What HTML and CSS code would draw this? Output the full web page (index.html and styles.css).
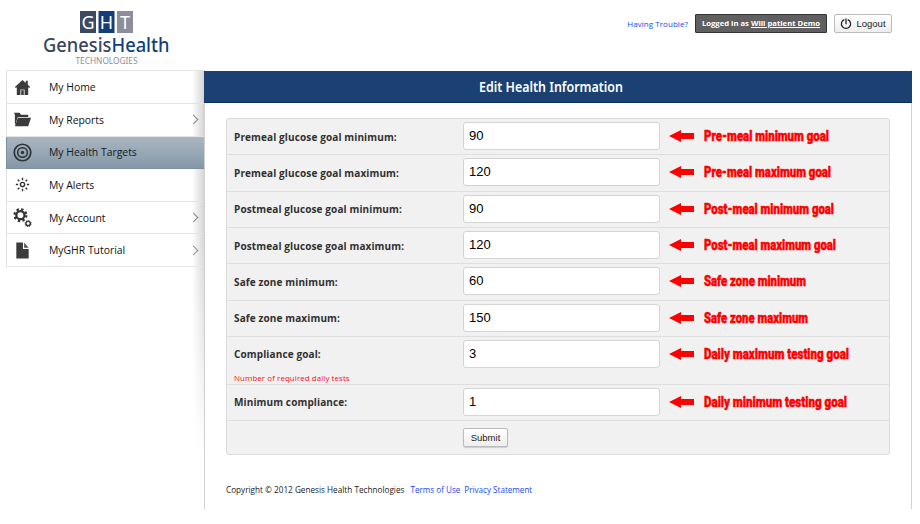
FILE: index.html
```html
<!DOCTYPE html>
<html lang="en">
<head>
<meta charset="utf-8">
<title>Edit Health Information</title>
<link rel="stylesheet" href="styles.css">
</head>
<body>
<header class="top">
  <svg class="logo" width="140" height="62" viewBox="0 0 140 62" role="img" aria-label="Genesis Health Technologies">
    <rect x="40" y="7" width="16" height="22" fill="#3b4a60"/><rect x="58.5" y="7" width="16" height="22" fill="#123e79"/><rect x="77" y="7" width="16" height="22" fill="#8c8f9b"/>
    <g class="logo-tiles"><text x="48" y="24.5" text-anchor="middle">G</text><text x="66.5" y="24.5" text-anchor="middle">H</text><text x="85" y="24.5" text-anchor="middle">T</text></g>
    <text class="logo-name" x="3" y="48" textLength="126.5" lengthAdjust="spacingAndGlyphs" fill="#38455d">Genesis<tspan fill="#133f7d">Health</tspan></text>
    <text class="logo-sub" x="35.5" y="59.5" textLength="62" lengthAdjust="spacingAndGlyphs">TECHNOLOGIES</text>
  </svg>
  <div class="account">
    <a class="trouble">Having Trouble?</a>
    <div class="user">Logged in as <u>Will patient Demo</u></div>
    <button class="btn logout"><svg width="12" height="12" viewBox="0 0 12 12" fill="none" stroke="#222" stroke-width="1.3"><path d="M4.3 1.6a4.6 4.6 0 1 0 3.4 0M6 .4v5.8"/></svg><span>Logout</span></button>
  </div>
</header>
<div class="main">
  <nav class="side">
    <a class="item"><svg viewBox="0 0 20 20"><path d="M10 2 2 9.5l1 1 1-.8V18h12V9.7l1 .8 1-1-2.4-2.3V3h-2.2v2.2z"/><path d="M7.7 12.5h1V18h-1zM11.3 12.5h1V18h-1zM7.7 12h4.6v1H7.7z" fill="#ddd"/></svg><span>My Home</span></a>
    <a class="item more"><svg viewBox="0 0 20 20"><path d="M1 3h6l1.3 2H16v2.3H5L2.7 15H2V5z"/><path d="M5.2 8.2H19L16 17H2z"/></svg><span>My Reports</span></a>
    <a class="item active"><svg viewBox="0 0 20 20" fill="none" stroke="#2e3236"><circle cx="10" cy="10" r="8.7" stroke-width="1.8"/><circle cx="10" cy="10" r="5.1" stroke-width="1.6"/><circle cx="10" cy="10" r="1.8" fill="#2e3236" stroke="none"/></svg><span>My Health Targets</span></a>
    <a class="item"><svg viewBox="0 0 20 20" fill="none" stroke="#333" stroke-width="1.5"><circle cx="10" cy="10" r="2.2"/><path d="M10 3v2.4M10 14.6V17M3 10h2.4M14.6 10H17M5 5l1.7 1.7M13.3 13.3 15 15M15 5l-1.7 1.7M6.7 13.3 5 15"/></svg><span>My Alerts</span></a>
    <a class="item more"><svg viewBox="0 0 20 20" fill="none" stroke="#333"><circle cx="7.8" cy="7.5" r="4.3" stroke-width="2.4"/><circle cx="7.8" cy="7.5" r="6.2" stroke-width="2.4" stroke-dasharray="2.5 2.37"/><circle cx="15.9" cy="16.4" r="2.3" stroke-width="1.5"/><circle cx="15.9" cy="16.4" r="3.2" stroke-width="1" stroke-dasharray="1.2 1.31"/></svg><span>My Account</span></a>
    <a class="item more"><svg viewBox="0 0 20 20"><path d="M3.5 1.5h7V8.5h6V18.5h-13z"/><path d="M11.7 1.7 16.5 7.2h-4.8z" fill="#555"/></svg><span>MyGHR Tutorial</span></a>
  </nav>
  <section class="panel">
    <h1><svg width="200" height="22"><text x="28" y="16" textLength="144" lengthAdjust="spacingAndGlyphs">Edit Health Information</text></svg></h1>
    <form class="box">
      <div class="row"><label>Premeal glucose goal minimum:</label><input value="90"><svg class="note" viewBox="0 0 215 24"><path d="M0 12 12 6v3h13v6H12v3z"/><text x="35" y="17" textLength="125" lengthAdjust="spacingAndGlyphs">Pre-meal minimum goal</text></svg></div>
      <div class="row tall"><label>Premeal glucose goal maximum:</label><input value="120"><svg class="note" viewBox="0 0 215 24"><path d="M0 12 12 6v3h13v6H12v3z"/><text x="35" y="17" textLength="127" lengthAdjust="spacingAndGlyphs">Pre-meal maximum goal</text></svg></div>
      <div class="row"><label>Postmeal glucose goal minimum:</label><input value="90"><svg class="note" viewBox="0 0 215 24"><path d="M0 12 12 6v3h13v6H12v3z"/><text x="35" y="17" textLength="130" lengthAdjust="spacingAndGlyphs">Post-meal minimum goal</text></svg></div>
      <div class="row"><label>Postmeal glucose goal maximum:</label><input value="120"><svg class="note" viewBox="0 0 215 24"><path d="M0 12 12 6v3h13v6H12v3z"/><text x="35" y="17" textLength="132" lengthAdjust="spacingAndGlyphs">Post-meal maximum goal</text></svg></div>
      <div class="row"><label>Safe zone minimum:</label><input value="60"><svg class="note" viewBox="0 0 215 24"><path d="M0 12 12 6v3h13v6H12v3z"/><text x="35" y="17" textLength="102" lengthAdjust="spacingAndGlyphs">Safe zone minimum</text></svg></div>
      <div class="row"><label>Safe zone maximum:</label><input value="150"><svg class="note" viewBox="0 0 215 24"><path d="M0 12 12 6v3h13v6H12v3z"/><text x="35" y="17" textLength="104" lengthAdjust="spacingAndGlyphs">Safe zone maximum</text></svg></div>
      <div class="row hinted"><label>Compliance goal:<small>Number of required daily tests</small></label><input value="3"><svg class="note" viewBox="0 0 215 24"><path d="M0 12 12 6v3h13v6H12v3z"/><text x="35" y="17" textLength="145" lengthAdjust="spacingAndGlyphs">Daily maximum testing goal</text></svg></div>
      <div class="row"><label>Minimum compliance:</label><input value="1"><svg class="note" viewBox="0 0 215 24"><path d="M0 12 12 6v3h13v6H12v3z"/><text x="35" y="17" textLength="143" lengthAdjust="spacingAndGlyphs">Daily minimum testing goal</text></svg></div>
      <div class="row submit"><button class="btn" type="button">Submit</button></div>
    </form>
    <footer>Copyright © 2012 Genesis Health Technologies <a>Terms of Use</a><a>Privacy Statement</a></footer>
  </section>
</div>
</body>
</html>
```
FILE: styles.css
```css
* { box-sizing: border-box; }
body { margin: 0; width: 920px; height: 524px; overflow: hidden; background: #fff; color: #222; font: 10.5px "Open Sans", sans-serif; }
.top { height: 70px; display: flex; justify-content: space-between; padding: 4px 28px 0 40px; }
svg { overflow: visible; }
.logo { display: block; font-family: "Noto Sans", sans-serif; }
.logo-tiles { fill: #fff; font-size: 18px; }
.logo-name { font-size: 19px; font-weight: 500; }
.logo-sub { font-size: 9px; fill: #8b8e98; }
.account { display: flex; align-items: center; height: 19px; margin-top: 10px; }
.trouble { color: #1749f5; font-size: 8px; letter-spacing: .05px; margin-right: 7px; }
.user { width: 132px; height: 19px; line-height: 17px; text-align: center; white-space: nowrap; background: #606060; border: 1px solid #333; border-radius: 1px; color: #fff; font-size: 7.7px; font-weight: 700; margin-right: 7px; }
.btn { display: flex; align-items: center; justify-content: center; padding: 0; height: 19px; border: 1px solid #bbb; border-radius: 2px; background: linear-gradient(#fff, #eee); color: #222; font: 9.5px "Liberation Sans", sans-serif; box-shadow: 0 1px 1px #ccc; }
.logout { width: 58px; gap: 4px; box-shadow: none; }
.main { display: flex; height: 439px; }
.side { width: 198px; margin-left: 6px; background: linear-gradient(to right, transparent 186px, rgba(0,0,0,.17)); position: relative; }
.side::after { content: ""; position: absolute; right: 0; top: 0; width: 14px; height: 439px; background: linear-gradient(to bottom, transparent 160px, #fff 385px); }
.side .item:first-child { height: 34px; border-top: 1px solid #e4e4e4; }
.item { height: 32.6px; display: flex; align-items: center; padding-left: 6px; border-left: 1px solid #e4e4e4; border-bottom: 1px solid #e4e4e4; color: #111; position: relative; font-size: 10.4px; line-height: 15px; }
.item span { padding-top: 1px; }
.item svg { width: 19px; height: 19px; fill: #3b3b3b; margin-right: 17px; }
.item svg[fill="none"] { fill: none; }
.item.active { background: linear-gradient(#a9b6c0, #8598a9); border-color: #7c91a5; color: #151b20; }
.more::after { content: ""; width: 6px; height: 6px; border: solid #888; border-width: 1.8px 1.8px 0 0; transform: rotate(45deg); margin-left: auto; margin-right: 7px; }
.panel { width: 708px; height: 439px; border: 1px solid #d0d0d0; border-width: 0 1px 0 1px; background: #fff; }
.panel h1 { margin: 1px -1px 0; height: 32px; display: flex; align-items: center; justify-content: center; padding-right: 14px; background: #1a4172; border-bottom: 1px solid #062e65; }
.panel h1 text { fill: #fff; font: 600 14px "Noto Sans", sans-serif; }
.box { width: 664px; height: 337px; margin: 15px 0 0 21px; border: 1px solid #dcdcdc; border-radius: 3px; background: #f1f1f1; }
.row { height: 36.25px; display: flex; align-items: flex-start; padding: 3px 0 0 7px; border-bottom: 1px solid #dfdfdf; }
.row.tall { height: 36.5px; }
.row.hinted { height: 48px; }
.row label { width: 229px; flex: none; padding-top: 7.5px; line-height: 15px; font-size: 10px; font-weight: 700; letter-spacing: .12px; color: #303030; white-space: nowrap; }
.row small { display: block; margin-top: 9.5px; line-height: 12px; color: #f31212; font-size: 7.9px; font-weight: 400; letter-spacing: .1px; }
.row input { width: 197px; flex: none; height: 28px; padding: 0 5px 1px; border: 1px solid #d4d4d4; border-radius: 3px; background: #fff; font: 13px "Liberation Sans", sans-serif; color: #000; }
.note { width: 215px; height: 24px; flex: none; margin: 2px 0 0 9px; fill: #f00; }
.note text { font: 900 14.5px Roboto, sans-serif; stroke: #f00; stroke-width: .5px; }
.row.submit { height: 34px; border: 0; padding: 7px 0 0 236px; }
.submit .btn { width: 45px; }
footer { margin: 28px 0 0 21px; font-size: 8.2px; line-height: 14px; white-space: nowrap; }
footer a { color: #1749f5; margin-left: 4px; font-size: 8.1px; }
```
